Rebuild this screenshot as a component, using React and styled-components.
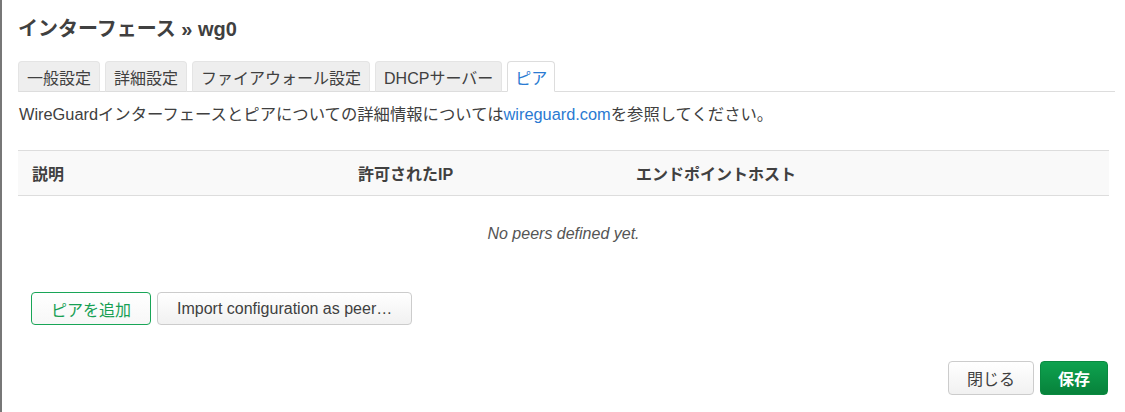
import React from 'react'
import styled, { createGlobalStyle } from 'styled-components'

const GlobalStyle = createGlobalStyle`
    body {
        margin: 0;
        background: #fff;
        font-family: "Liberation Sans", Arial, "Noto Sans CJK JP", sans-serif;
        color: #404040;
    }
`

const Dialog = styled.div`
    box-sizing: border-box;
    height: 412px;
    border-left: 2px solid #777;
    padding: 17px 10px 0 16px;
    display: flex;
    flex-direction: column;
`

const Titulo = styled.h2`
    margin: 0;
    font-size: 20px;
    line-height: 24px;
    font-weight: bold;
    color: #404040;
`

const TabList = styled.ul`
    list-style: none;
    margin: 20px 0 0;
    padding: 0;
    display: flex;
    gap: 5px;
    border-bottom: 1px solid #ddd;
`

const Tab = styled.li`
    box-sizing: border-box;
    height: 31px;
    margin-bottom: -1px;
    padding: 0 ${p => (p.$active ? 7 : 8)}px;
    display: flex;
    align-items: center;
    font-size: 16px;
    border: 1px solid ${p => (p.$active ? '#ddd' : '#e4e4e4')};
    border-bottom-color: ${p => (p.$active ? '#fff' : '#ddd')};
    border-radius: 4px 4px 0 0;
    background: ${p => (p.$active ? '#fff' : '#eee')};
    color: ${p => (p.$active ? '#2a7ad2' : '#404040')};
`

const Descricao = styled.p`
    margin: 10px 0 0;
    font-size: 16.35px;
    line-height: 24px;
    padding-left: 1px;
`

const Link = styled.a`
    color: #2a7ad2;
    text-decoration: none;
`

const Tabela = styled.div`
    margin: 24px 6px 0 0;
`

const Cabecalho = styled.div`
    display: grid;
    grid-template-columns: 326px 278px 1fr;
    height: 46px;
    box-sizing: border-box;
    align-items: center;
    background: #f9f9f9;
    border-top: 1px solid #ddd;
    border-bottom: 1px solid #ddd;
`

const Coluna = styled.div`
    padding-left: 14px;
    font-weight: bold;
    font-size: 16px;
`

const LinhaVazia = styled.div`
    height: 76px;
    display: flex;
    align-items: center;
    justify-content: center;
    font-style: italic;
    font-size: 16px;
    color: #555;
`

const Acoes = styled.div`
    display: flex;
    gap: 6px;
    margin: 20px 0 0 13px;
`

const Botao = styled.button`
    box-sizing: border-box;
    height: ${p => (p.$alto ? '34px' : '33px')};
    padding: 0 ${p => (p.$pad || 19)}px;
    font-family: inherit;
    font-size: 16px;
    border-radius: 4px;
    border: 1px solid #ccc;
    background: linear-gradient(#fff, #f1f1f1);
    color: #404040;
    cursor: pointer;
`

const BotaoVerde = styled(Botao)`
    border-color: #19a557;
    color: #17a054;
    background: linear-gradient(#fff, #f7f7f7);
`

const BotaoSalvar = styled(Botao)`
    border-color: #0a8a41;
    color: #fff;
    font-weight: bold;
    background: linear-gradient(#0ea24f, #07823b);
`

const Rodape = styled.div`
    display: flex;
    justify-content: flex-end;
    gap: 6px;
    margin: 36px 7px 0 0;
`

export default function App() {
    return (
        <Dialog>
            <GlobalStyle />
            <Titulo>インターフェース » wg0</Titulo>
            <TabList>
                <Tab>一般設定</Tab>
                <Tab>詳細設定</Tab>
                <Tab>ファイアウォール設定</Tab>
                <Tab>DHCPサーバー</Tab>
                <Tab $active>ピア</Tab>
            </TabList>
            <Descricao>
                WireGuardインターフェースとピアについての詳細情報については
                <Link href="#">wireguard.com</Link>を参照してください。
            </Descricao>
            <Tabela>
                <Cabecalho>
                    <Coluna>説明</Coluna>
                    <Coluna>許可されたIP</Coluna>
                    <Coluna>エンドポイントホスト</Coluna>
                </Cabecalho>
                <LinhaVazia>No peers defined yet.</LinhaVazia>
            </Tabela>
            <Acoes>
                <BotaoVerde>ピアを追加</BotaoVerde>
                <Botao>Import configuration as peer…</Botao>
            </Acoes>
            <Rodape>
                <Botao $alto $pad={18}>閉じる</Botao>
                <BotaoSalvar $alto $pad={17}>保存</BotaoSalvar>
            </Rodape>
        </Dialog>
    )
}
